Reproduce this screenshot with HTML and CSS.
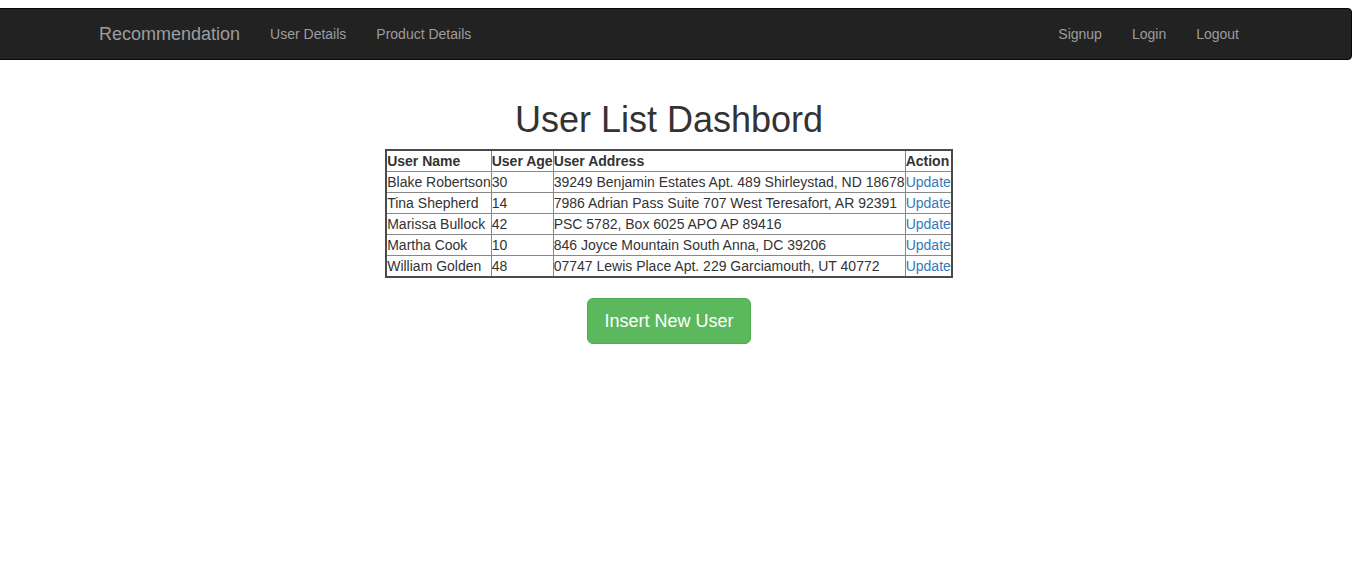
FILE: index.html
```html
<!DOCTYPE html>
<html>
<head>
<meta charset="utf-8">
<title>User List Dashbord</title>
<link rel="stylesheet" href="styles.css">
</head>
<body>
<div class="page">
<nav class="navbar">
  <div class="nav-container">
    <a class="brand" href="#">Recommendation</a>
    <ul class="nav-links">
      <li><a href="#">User Details</a></li>
      <li><a href="#">Product Details</a></li>
    </ul>
    <ul class="nav-links nav-right">
      <li><a href="#">Signup</a></li>
      <li><a href="#">Login</a></li>
      <li><a href="#">Logout</a></li>
    </ul>
  </div>
</nav>
<main class="main">
  <h1 class="title">User List Dashbord</h1>
  <table class="users">
    <thead>
      <tr><th>User Name</th><th>User Age</th><th>User Address</th><th>Action</th></tr>
    </thead>
    <tbody>
      <tr><td>Blake Robertson</td><td>30</td><td>39249 Benjamin Estates Apt. 489 Shirleystad, ND 18678</td><td><a href="#">Update</a></td></tr>
      <tr><td>Tina Shepherd</td><td>14</td><td>7986 Adrian Pass Suite 707 West Teresafort, AR 92391</td><td><a href="#">Update</a></td></tr>
      <tr><td>Marissa Bullock</td><td>42</td><td>PSC 5782, Box 6025 APO AP 89416</td><td><a href="#">Update</a></td></tr>
      <tr><td>Martha Cook</td><td>10</td><td>846 Joyce Mountain South Anna, DC 39206</td><td><a href="#">Update</a></td></tr>
      <tr><td>William Golden</td><td>48</td><td>07747 Lewis Place Apt. 229 Garciamouth, UT 40772</td><td><a href="#">Update</a></td></tr>
    </tbody>
  </table>
  <a class="btn-insert" href="#">Insert New User</a>
</main>
</div>
</body>
</html>
```

FILE: styles.css
```css
html {
  background: #fff;
}
body {
  margin: 0;
  font-family: "Liberation Sans", Arial, Helvetica, sans-serif;
  font-size: 14px;
  line-height: 20px;
  color: #333;
}
.page {
  padding-top: 8px;
}
a {
  text-decoration: none;
}
.navbar {
  box-sizing: border-box;
  width: calc(100% + 14px);
  margin: 0 0 40px -14px;
  background: #222;
  border: 1px solid #080808;
  border-radius: 4px;
  min-height: 52px;
}
.nav-container {
  width: 1170px;
  margin: 0 auto;
  display: flex;
  align-items: center;
}
.brand {
  display: block;
  padding: 15px;
  font-size: 18px;
  line-height: 20px;
  color: #9d9d9d;
}
.nav-links {
  list-style: none;
  margin: 0;
  padding: 0;
  display: flex;
}
.nav-links a {
  display: block;
  padding: 15px;
  line-height: 20px;
  color: #9d9d9d;
}
.nav-right {
  margin-left: auto;
}
.main {
  margin: 0 22px 0 8px;
  display: flex;
  flex-direction: column;
  align-items: center;
}
.title {
  margin: 0 0 9px;
  font-size: 36px;
  font-weight: 500;
  line-height: 1.1;
  color: #333;
}
.users {
  border-collapse: collapse;
  border: 2px solid #4a4a4a;
  margin-bottom: 20px;
}
.users th, .users td {
  border: 1px solid #888;
  padding: 0;
  text-align: left;
  white-space: nowrap;
  line-height: 20px;
}
.users th {
  font-weight: bold;
}
.users a {
  color: #337ab7;
}
.btn-insert {
  display: inline-block;
  padding: 10px 16px;
  font-size: 18px;
  line-height: 24px;
  color: #fff;
  background: #5cb85c;
  border: 1px solid #4cae4c;
  border-radius: 6px;
}
```
